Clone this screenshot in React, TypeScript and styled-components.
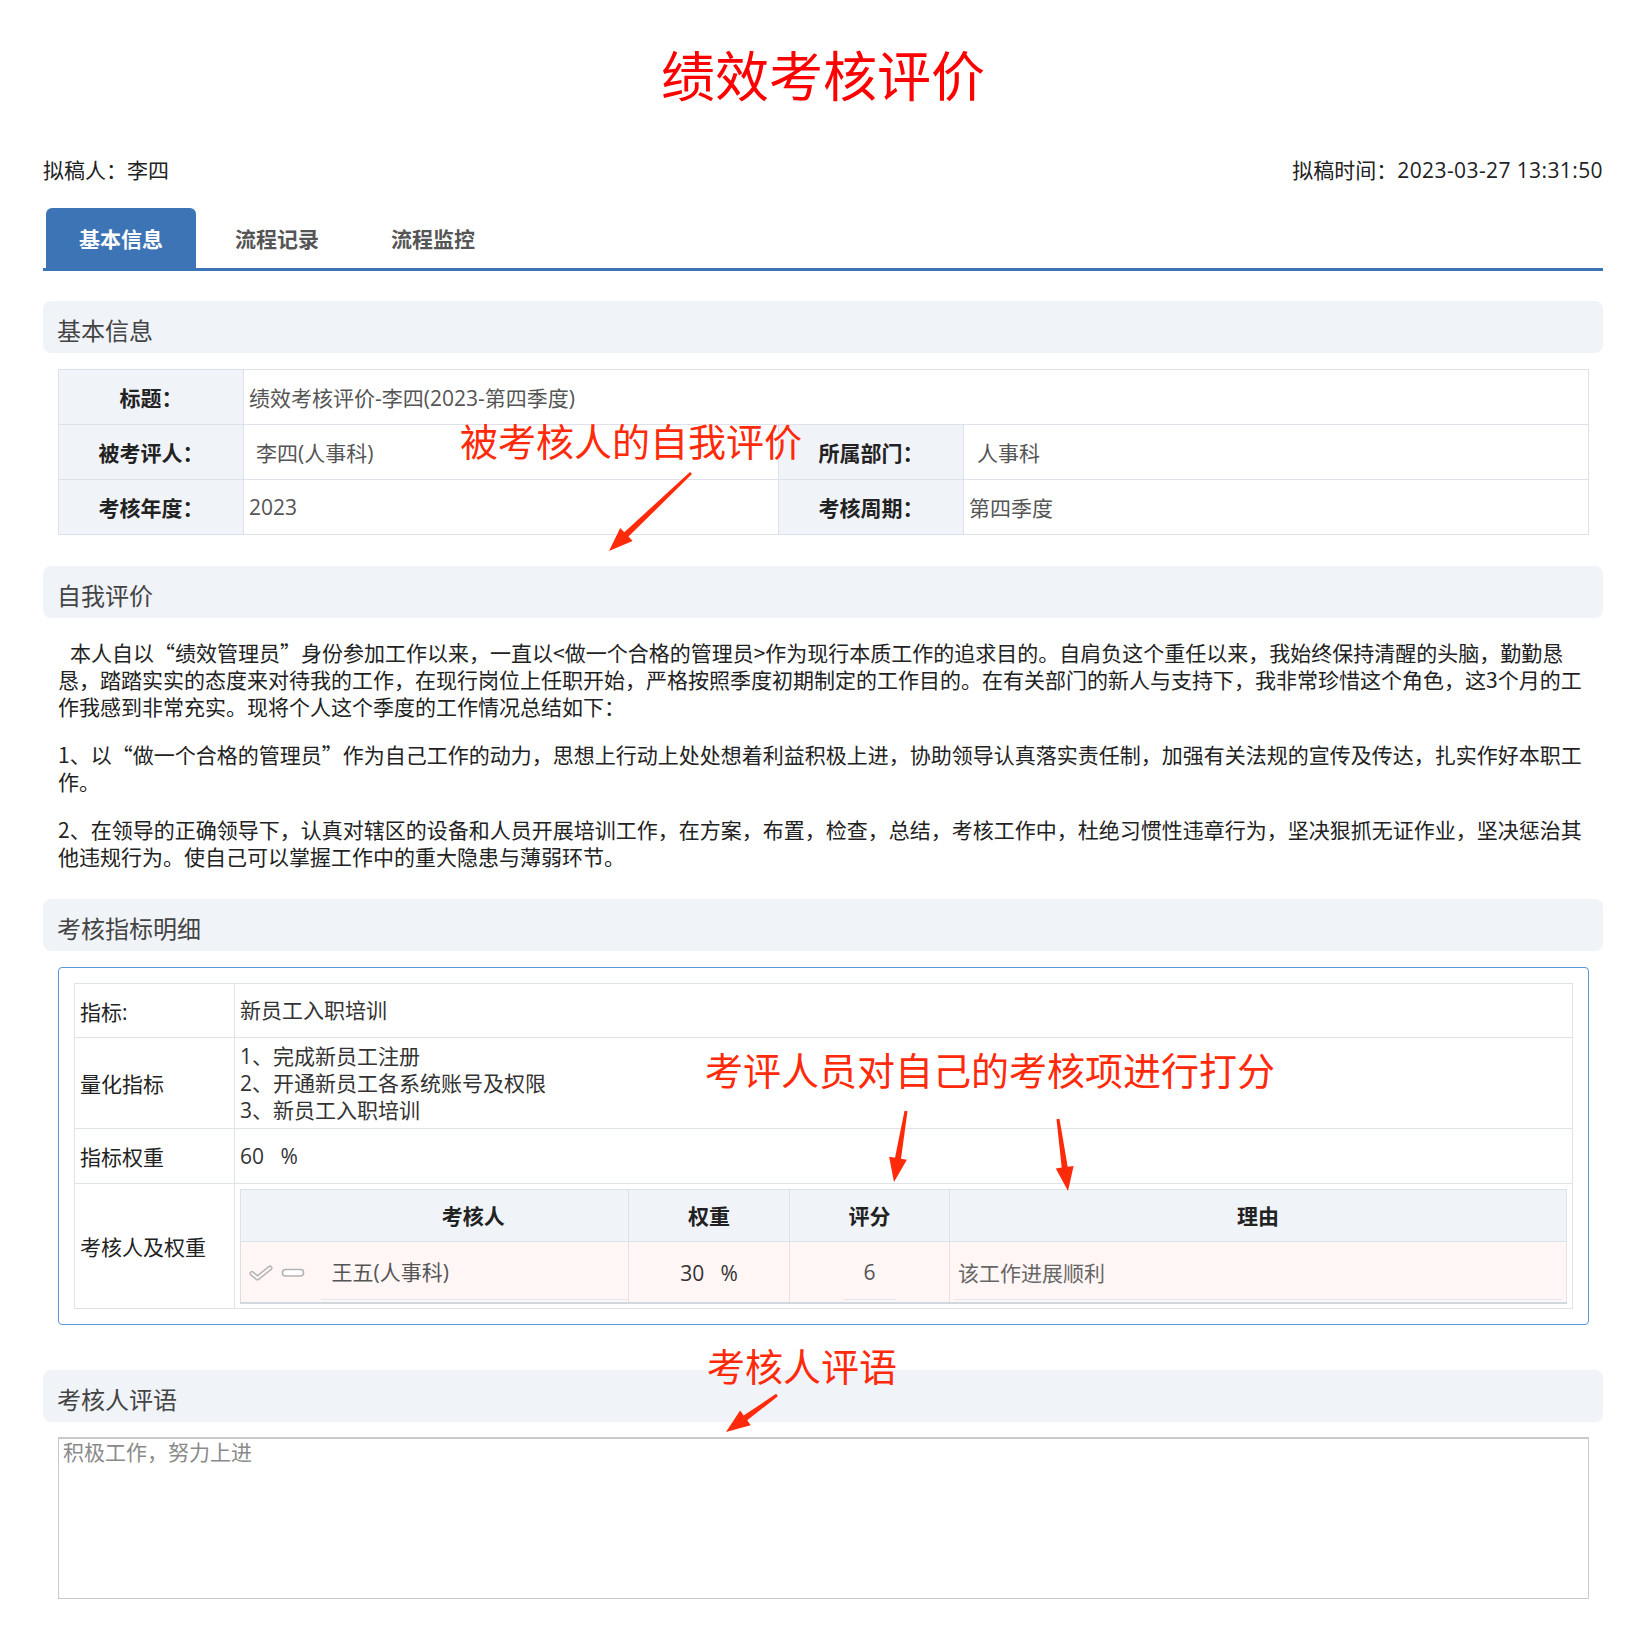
import React from "react";
import styled, { createGlobalStyle } from "styled-components";

const GlobalStyle = createGlobalStyle`
  html, body { margin: 0; padding: 0; background: #fff; }
  body {
    font-family: "Open Sans", "Noto Sans CJK SC", sans-serif;
    color: #333;
  }
  * { box-sizing: border-box; }
`;

const CJK = `"Noto Sans CJK SC", "Open Sans", sans-serif`;

const Root = styled.div`
  position: relative;
  width: 1640px;
  padding: 33px 37px 33px 43px;
`;

const Title = styled.h1`
  margin: 0;
  font-family: ${CJK};
  font-size: 54px;
  line-height: 81px;
  font-weight: 400;
  color: #ff0000;
  text-align: center;
`;

const Meta = styled.div`
  margin-top: 43px;
  display: flex;
  justify-content: space-between;
  font-size: 21px;
  line-height: 27px;
  color: #222;
`;

const Stamp = styled.span`
  letter-spacing: 0.4px;
`;

const TabBar = styled.div`
  margin-top: 24px;
  display: flex;
  gap: 6px;
  padding-left: 3px;
  border-bottom: 3px solid #3d74b6;
`;

const Tab = styled.div<{ $active?: boolean }>`
  width: 150px;
  height: 60px;
  display: flex;
  align-items: center;
  justify-content: center;
  font-family: ${CJK};
  font-size: 21px;
  font-weight: 700;
  border-radius: 6px 6px 0 0;
  background: ${(p) => (p.$active ? "#3d74b6" : "transparent")};
  color: ${(p) => (p.$active ? "#fff" : "#555")};
`;

const SectionHeader = styled.div<{ $top: number }>`
  margin-top: ${(p) => p.$top}px;
  height: 52px;
  line-height: 57px;
  padding-left: 14px;
  background: #f0f3f8;
  border-radius: 8px;
  font-family: ${CJK};
  font-size: 24px;
  color: #444;
`;

const InfoTable = styled.table`
  margin: 16px 14px 0 15px;
  width: 1531px;
  border-collapse: collapse;
  table-layout: fixed;
  font-size: 21px;
  tr { height: 55px; }
`;

const InfoLabel = styled.td`
  border: 1px solid #dde2ea;
  background: #f0f3f8;
  font-weight: 700;
  text-align: center;
  color: #222;
  padding: 0;
`;

const InfoValue = styled.td<{ $indent?: number }>`
  border: 1px solid #dde2ea;
  color: #555;
  padding: 0 5px 0 ${(p) => 5 + (p.$indent || 0)}px;
`;

const TextBlock = styled.div`
  padding: 21px 15px 0;
  font-family: ${CJK};
  font-size: 21px;
  line-height: 27px;
  color: #222;
`;

const Para = styled.p<{ $indent?: boolean }>`
  margin: 0 0 21px;
  text-indent: ${(p) => (p.$indent ? "12px" : "0")};
  &:last-child { margin-bottom: 0; }
`;

const IndicatorBox = styled.div`
  margin: 16px 14px 0 15px;
  border: 1px solid #5b95d8;
  border-radius: 4px;
  padding: 15px;
`;

const IndTable = styled.table`
  width: 100%;
  border-collapse: collapse;
  table-layout: fixed;
  font-size: 21px;
`;

const IndRow = styled.tr<{ $h: number }>`
  height: ${(p) => p.$h}px;
`;

const IndLabel = styled.td`
  border: 1px solid #dfe2e8;
  padding: 0 5px;
  color: #222;
  vertical-align: middle;
`;

const IndValue = styled.td<{ $pad?: string }>`
  border: 1px solid #dfe2e8;
  padding: ${(p) => p.$pad || "0 5px"};
  color: #333;
  line-height: 27px;
  vertical-align: middle;
  white-space: pre-line;
`;

const Spaced = styled.span`
  white-space: pre;
`;

const SubTable = styled.table`
  width: 100%;
  border-collapse: collapse;
  table-layout: fixed;
  border: 1px solid #d9dde4;
  border-bottom: 2px solid #d2d6dd;
`;

const SubHead = styled.th<{ $noRight?: boolean; $noLeft?: boolean }>`
  height: 52px;
  background: #f0f3f8;
  border: 1px solid #dde1e8;
  ${(p) => (p.$noRight ? "border-right: none;" : "")}
  ${(p) => (p.$noLeft ? "border-left: none;" : "")}
  font-family: ${CJK};
  font-weight: 700;
  font-size: 21px;
  color: #222;
  text-align: center;
  padding: 0;
`;

const SubCell = styled.td<{ $noRight?: boolean }>`
  height: 61px;
  background: #fff6f5;
  border-right: ${(p) => (p.$noRight ? "none" : "1px solid #e0e3ea")};
  padding: 0;
  vertical-align: bottom;
`;

const Icons = styled.div`
  height: 58px;
  display: flex;
  align-items: center;
  gap: 8px;
  padding-left: 8px;
`;

const FieldLine = styled.div<{ $align?: string; $color?: string }>`
  height: 56px;
  line-height: 56px;
  margin-bottom: 2px;
  border-bottom: 1px solid #e3e6ec;
  text-align: ${(p) => p.$align || "left"};
  color: ${(p) => p.$color || "#555"};
  font-size: 21px;
`;

const NameField = styled(FieldLine)`
  margin-left: 2px;
  padding-left: 11px;
`;

const ScoreField = styled(FieldLine)`
  width: 52px;
  margin: 0 auto 2px;
`;

const ReasonField = styled(FieldLine)`
  margin: 0 4px 2px;
  padding-left: 4px;
  font-family: ${CJK};
`;

const PlainField = styled.div`
  height: 58px;
  line-height: 58px;
  text-align: center;
  color: #333;
  font-size: 21px;
  white-space: pre;
`;

const CommentBox = styled.div`
  margin: 15px 14px 0 15px;
  height: 162px;
  border: 1px solid #c9c9c9;
  border-top-width: 2px;
  padding: 0 4px;
  font-family: ${CJK};
  font-size: 21px;
  line-height: 25px;
  color: #8a8a8a;
`;

const Note = styled.div<{ $x: number; $y: number }>`
  position: absolute;
  left: ${(p) => p.$x}px;
  top: ${(p) => p.$y}px;
  font-family: ${CJK};
  font-size: 38px;
  line-height: 38px;
  color: #ff2a0a;
  white-space: nowrap;
  pointer-events: none;
`;

const ArrowLayer = styled.svg`
  position: absolute;
  left: 0;
  top: 0;
  pointer-events: none;
`;

type Pt = [number, number];

function arrowPoints(tail: Pt, tip: Pt): string {
  const dx = tip[0] - tail[0];
  const dy = tip[1] - tail[1];
  const len = Math.hypot(dx, dy);
  const ux = dx / len;
  const uy = dy / len;
  const nx = -uy;
  const ny = ux;
  const L = 24;
  const W = 9;
  const t = 1.5;
  const s = 3;
  const bx = tip[0] - ux * L;
  const by = tip[1] - uy * L;
  const pts: Pt[] = [
    [tail[0] + nx * t, tail[1] + ny * t],
    [bx + nx * s, by + ny * s],
    [bx + nx * W, by + ny * W],
    [tip[0], tip[1]],
    [bx - nx * W, by - ny * W],
    [bx - nx * s, by - ny * s],
    [tail[0] - nx * t, tail[1] - ny * t],
  ];
  return pts.map((p) => `${p[0].toFixed(1)},${p[1].toFixed(1)}`).join(" ");
}

const arrows: [Pt, Pt][] = [
  [[691, 473], [609, 551]],
  [[906, 1111], [894, 1182]],
  [[1058, 1119], [1068, 1191]],
  [[777, 1395], [726, 1432]],
];

const CheckIcon = () => (
  <svg width="24" height="16" viewBox="0 0 24 16">
    <path d="M3 8.5 L8.5 13 L21 3" fill="none" stroke="#b3b3b3" strokeWidth="5" strokeLinecap="round" strokeLinejoin="round" />
    <path d="M3 8.5 L8.5 13 L21 3" fill="none" stroke="#fff6f5" strokeWidth="2.2" strokeLinecap="round" strokeLinejoin="round" />
  </svg>
);

const PillIcon = () => (
  <svg width="24" height="10" viewBox="0 0 24 10">
    <rect x="1.5" y="1.5" width="21" height="6.5" rx="3" fill="#fff" stroke="#b3b3b3" strokeWidth="1.6" />
  </svg>
);

export default function App() {
  return (
    <Root lang="zh-CN">
      <GlobalStyle />
      <Title>绩效考核评价</Title>
      <Meta>
        <span>拟稿人：李四</span>
        <span>
          拟稿时间：<Stamp>2023-03-27 13:31:50</Stamp>
        </span>
      </Meta>
      <TabBar>
        <Tab $active>基本信息</Tab>
        <Tab>流程记录</Tab>
        <Tab>流程监控</Tab>
      </TabBar>

      <SectionHeader $top={30}>基本信息</SectionHeader>
      <InfoTable>
        <colgroup>
          <col style={{ width: 185 }} />
          <col style={{ width: 535 }} />
          <col style={{ width: 185 }} />
          <col />
        </colgroup>
        <tbody>
          <tr>
            <InfoLabel>标题：</InfoLabel>
            <InfoValue colSpan={3}>绩效考核评价-李四(2023-第四季度)</InfoValue>
          </tr>
          <tr>
            <InfoLabel>被考评人：</InfoLabel>
            <InfoValue $indent={7}>李四(人事科)</InfoValue>
            <InfoLabel>所属部门：</InfoLabel>
            <InfoValue $indent={8}>人事科</InfoValue>
          </tr>
          <tr>
            <InfoLabel>考核年度：</InfoLabel>
            <InfoValue>2023</InfoValue>
            <InfoLabel>考核周期：</InfoLabel>
            <InfoValue>第四季度</InfoValue>
          </tr>
        </tbody>
      </InfoTable>

      <SectionHeader $top={31}>自我评价</SectionHeader>
      <TextBlock>
        <Para $indent>
          本人自以“绩效管理员”身份参加工作以来，一直以&lt;做一个合格的管理员&gt;作为现行本质工作的追求目的。自肩负这个重任以来，我始终保持清醒的头脑，勤勤恳恳，踏踏实实的态度来对待我的工作，在现行岗位上任职开始，严格按照季度初期制定的工作目的。在有关部门的新人与支持下，我非常珍惜这个角色，这3个月的工作我感到非常充实。现将个人这个季度的工作情况总结如下：
        </Para>
        <Para>
          1、以“做一个合格的管理员”作为自己工作的动力，思想上行动上处处想着利益积极上进，协助领导认真落实责任制，加强有关法规的宣传及传达，扎实作好本职工作。
        </Para>
        <Para>
          2、在领导的正确领导下，认真对辖区的设备和人员开展培训工作，在方案，布置，检查，总结，考核工作中，杜绝习惯性违章行为，坚决狠抓无证作业，坚决惩治其他违规行为。使自己可以掌握工作中的重大隐患与薄弱环节。
        </Para>
      </TextBlock>

      <SectionHeader $top={29}>考核指标明细</SectionHeader>
      <IndicatorBox>
        <IndTable>
          <colgroup>
            <col style={{ width: 160 }} />
            <col />
          </colgroup>
          <tbody>
            <IndRow $h={54}>
              <IndLabel>指标:</IndLabel>
              <IndValue>新员工入职培训</IndValue>
            </IndRow>
            <IndRow $h={91}>
              <IndLabel>量化指标</IndLabel>
              <IndValue>{"1、完成新员工注册\n2、开通新员工各系统账号及权限\n3、新员工入职培训"}</IndValue>
            </IndRow>
            <IndRow $h={55}>
              <IndLabel>指标权重</IndLabel>
              <IndValue>
                <Spaced>{"60   %"}</Spaced>
              </IndValue>
            </IndRow>
            <IndRow $h={124}>
              <IndLabel>考核人及权重</IndLabel>
              <IndValue $pad="5px 5px 4px">
                <SubTable>
                  <colgroup>
                    <col style={{ width: 78 }} />
                    <col style={{ width: 310 }} />
                    <col style={{ width: 161 }} />
                    <col style={{ width: 160 }} />
                    <col />
                  </colgroup>
                  <thead>
                    <tr>
                      <SubHead $noRight />
                      <SubHead $noLeft>考核人</SubHead>
                      <SubHead>权重</SubHead>
                      <SubHead>评分</SubHead>
                      <SubHead>理由</SubHead>
                    </tr>
                  </thead>
                  <tbody>
                    <tr>
                      <SubCell $noRight>
                        <Icons>
                          <CheckIcon />
                          <PillIcon />
                        </Icons>
                      </SubCell>
                      <SubCell>
                        <NameField>王五(人事科)</NameField>
                      </SubCell>
                      <SubCell>
                        <PlainField>{"30   %"}</PlainField>
                      </SubCell>
                      <SubCell>
                        <ScoreField $align="center">6</ScoreField>
                      </SubCell>
                      <SubCell>
                        <ReasonField $color="#666">该工作进展顺利</ReasonField>
                      </SubCell>
                    </tr>
                  </tbody>
                </SubTable>
              </IndValue>
            </IndRow>
          </tbody>
        </IndTable>
      </IndicatorBox>

      <SectionHeader $top={45}>考核人评语</SectionHeader>
      <CommentBox>积极工作，努力上进</CommentBox>

      <Note $x={460} $y={421}>被考核人的自我评价</Note>
      <Note $x={705} $y={1050}>考评人员对自己的考核项进行打分</Note>
      <Note $x={707} $y={1346}>考核人评语</Note>
      <ArrowLayer width={1640} height={1631} viewBox="0 0 1640 1631">
        {arrows.map(([a, b], i) => (
          <polygon key={i} points={arrowPoints(a, b)} fill="#ff2a0a" />
        ))}
      </ArrowLayer>
    </Root>
  );
}
